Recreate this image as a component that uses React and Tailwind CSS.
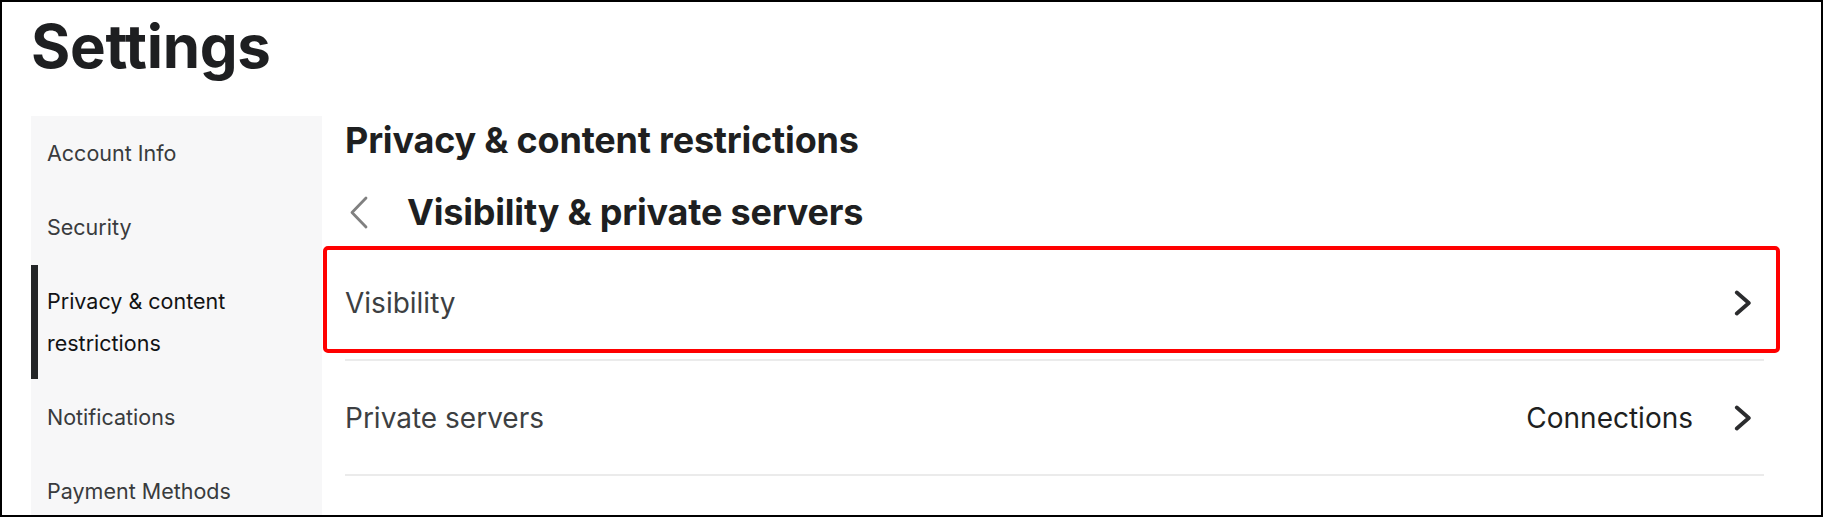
import React from "react";

function ChevronRight() {
  return (
    <svg width="18" height="26" viewBox="0 0 18 26" fill="none" className="shrink-0">
      <path d="M2.8 2.5 L14.8 13 L2.8 23.5" stroke="#2b2c2e" strokeWidth="3.8" strokeLinecap="round" strokeLinejoin="round" />
    </svg>
  );
}

function ChevronLeft() {
  return (
    <svg width="20" height="33" viewBox="0 0 20 33" fill="none" className="shrink-0">
      <path d="M17 2 L3 16.5 L17 31" stroke="#808080" strokeWidth="2.8" strokeLinecap="round" strokeLinejoin="round" />
    </svg>
  );
}

const items = [
  { label: "Account Info" },
  { label: "Security" },
  { label: "Privacy & content restrictions", active: true },
  { label: "Notifications" },
  { label: "Payment Methods" },
];

export default function App() {
  return (
    <div
      className="w-[1823px] h-[517px] border-2 border-black bg-white overflow-hidden relative"
      style={{ fontFamily: "Inter, 'Noto Sans', sans-serif" }}
    >
      <h1 className="pl-[29px] pt-[14px] text-[60px] leading-[60px] font-bold text-[#1e1f21] tracking-[-0.3px]">
        Settings
      </h1>
      <div className="flex pl-[29px] mt-[40px]">
        <nav className="w-[291px] shrink-0 bg-[#f7f7f8] h-[420px]">
          {items.map((it) => (
            <div key={it.label} className="relative py-4 pl-4 pr-6">
              {it.active && <div className="absolute left-0 top-[1px] bottom-[1px] w-[7px] bg-[#232527]" />}
              <div
                className={
                  "text-[21.5px] leading-[42px] " + (it.active ? "text-[#121314]" : "text-[#393b3d]")
                }
              >
                {it.label}
              </div>
            </div>
          ))}
        </nav>
        <main className="ml-[23px] w-[1419px] flex flex-col">
          <h2 className="text-[36px] leading-[48px] font-bold text-[#1e1f21] tracking-[-0.2px]">
            Privacy &amp; content restrictions
          </h2>
          <div className="mt-[24px] h-[48px] flex items-center">
            <div className="ml-[4px]">
              <ChevronLeft />
            </div>
            <h3 className="ml-[38px] text-[36px] leading-[48px] font-bold text-[#1e1f21] tracking-[-0.2px]">
              Visibility &amp; private servers
            </h3>
          </div>
          <div className="mt-[10px] relative h-[115px] border-b-2 border-[#ebebeb] flex items-center justify-between pr-[12px]">
            <span className="text-[28px] text-[#3d3f42]">Visibility</span>
            <ChevronRight />
            <div className="absolute left-[-22px] top-0 w-[1457px] h-[107px] border-4 border-[#f00] rounded-[5px]" />
          </div>
          <div className="h-[115px] border-b-2 border-[#ebebeb] flex items-center justify-between pr-[12px]">
            <span className="text-[28px] text-[#3d3f42]">Private servers</span>
            <div className="flex items-center gap-[41px]">
              <span className="text-[28px] text-[#1e1f21]">Connections</span>
              <ChevronRight />
            </div>
          </div>
        </main>
      </div>
    </div>
  );
}
